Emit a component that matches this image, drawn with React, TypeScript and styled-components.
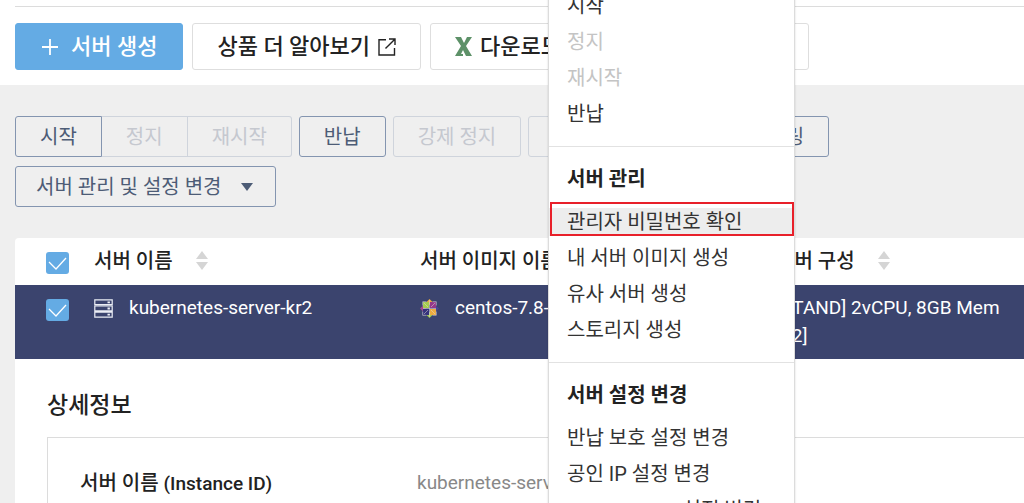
import React from "react";
import styled, { createGlobalStyle, css } from "styled-components";

const GlobalStyle = createGlobalStyle`
  *, *::before, *::after { box-sizing: border-box; }
  html, body { margin: 0; height: 100%; }
  #root { height: 100%; }
  body {
    background: #efefef;
    color: #222;
    font-family: Roboto, "Noto Sans CJK KR", sans-serif;
    font-size: 20px;
    line-height: 28px;
    overflow: hidden;
  }
  button { font: inherit; cursor: pointer; }
`;

const Page = styled.div`
  position: relative;
  height: 100%;
  overflow: hidden;
`;

const Header = styled.header`
  background: #fff;
  padding: 6px 0 15px 15px;
`;

const HeaderActions = styled.div`
  display: flex;
  gap: 9px;
  padding-top: 16px;
  border-top: 1px solid #dcdcdc;
`;

const ActionButton = styled.button<{ $primary?: boolean; $dropdown?: boolean }>`
  display: flex;
  align-items: center;
  justify-content: space-between;
  gap: ${(p) => (p.$primary ? 12 : 8)}px;
  height: 47px;
  min-width: ${(p) => (p.$dropdown ? 214 : 0)}px;
  padding: 0 ${(p) => (p.$dropdown ? 13 : p.$primary ? 25 : 24)}px 0 ${(p) => (p.$primary ? 25 : 24)}px;
  border: 1px solid ${(p) => (p.$primary ? "#64abe4" : "#dedede")};
  border-radius: 3px;
  background: ${(p) => (p.$primary ? "#64abe4" : "#fff")};
  color: ${(p) => (p.$primary ? "#fff" : "#222")};
  font-size: 22px;
  font-weight: 500;
  white-space: nowrap;
`;

const Toolbar = styled.div`
  display: flex;
  flex-wrap: wrap;
  gap: 9px 7px;
  padding: 31px 15px;
`;

const ButtonGroup = styled.div`
  display: flex;
`;

const ToolButton = styled.button<{ $dropdown?: boolean }>`
  display: flex;
  align-items: center;
  gap: 20px;
  height: 41px;
  padding: ${(p) => (p.$dropdown ? "0 22px 0 20px" : "0 24px")};
  border: 1px solid #8495b0;
  border-radius: 3px;
  background: transparent;
  color: #4d5c76;
  white-space: nowrap;

  &:disabled {
    border-color: #cfd4dc;
    color: #c5c8cf;
  }

  ${ButtonGroup} &:not(:last-child) { border-top-right-radius: 0; border-bottom-right-radius: 0; }
  ${ButtonGroup} & + & {
    border-left: 0;
    border-top-left-radius: 0;
    border-bottom-left-radius: 0;
  }
`;

const Card = styled.main`
  margin-left: 15px;
  border-top-left-radius: 4px;
  background: #fff;
  height: 100%;
`;

const Table = styled.table`
  width: 100%;
  table-layout: fixed;
  border-collapse: collapse;
`;

const CheckCol = styled.col`
  width: 79px;
`;
const NameCol = styled.col`
  width: 326px;
`;
const ImageCol = styled.col`
  width: 356px;
`;

const HeadCell = styled.th`
  height: 47px;
  padding: 0 0 2px;
  text-align: left;
  font-weight: 500;
  white-space: nowrap;
`;

const HeadLabel = styled.span`
  display: flex;
  align-items: center;
  gap: 23px;
`;

const BodyRow = styled.tr`
  background: #3b446e;
  color: #fff;
  font-size: 19px;
`;

const Cell = styled.td`
  height: 74px;
  padding: 9px 0;
  vertical-align: top;
`;

const CellContent = styled.span`
  display: flex;
  align-items: center;
  gap: 16px;
`;

const Check = styled.input`
  display: block;
  appearance: none;
  width: 23px;
  height: 22px;
  margin: 5px 0 1px 31px;
  border-radius: 3px;
  background: #64abe4
    url("data:image/svg+xml,%3Csvg xmlns='http://www.w3.org/2000/svg' viewBox='0 0 23 22'%3E%3Cpath d='M3 10l7 7L20 6' fill='none' stroke='white' stroke-width='1.3'/%3E%3C/svg%3E");
`;

const Detail = styled.section`
  padding: 32px 0 0 32px;
`;

const DetailTitle = styled.h2`
  margin: 0 0 16px;
  font-size: 23px;
  line-height: 30px;
  font-weight: 500;
`;

const DetailBox = styled.dl`
  display: flex;
  margin: 0;
  height: 200px;
  padding: 31px 0 0 32px;
  border: 1px solid #dcdcdc;
  border-right: 0;
`;

const DetailTerm = styled.dt`
  width: 337px;
  font-weight: 500;
`;

const Latin = styled.span`
  font-size: 19px;
`;

const DetailValue = styled.dd`
  margin: 0;
  color: #888;
  font-size: 19px;
`;

const Menu = styled.div`
  position: absolute;
  left: 548px;
  top: -70px;
  width: 247px;
  background: #fff;
  border: 1px solid #dcdcdc;
  box-shadow: 0 0 2px rgba(0, 0, 0, 0.15);
`;

const MenuGroup = styled.div`
  padding: 18px 0 10px;
  & + & { border-top: 1px solid #e2e2e2; }
`;

const MenuTitle = styled.h3`
  margin: 0 0 15px;
  padding: 0 18px;
  font-size: 20px;
  line-height: 28px;
  font-weight: 700;
`;

const MenuItem = styled.button<{ $marked?: boolean }>`
  display: block;
  position: relative;
  width: 100%;
  height: 28px;
  margin-bottom: 8px;
  padding: 0 18px;
  border: 0;
  background: ${(p) => (p.$marked ? "#ededed" : "#fff")};
  color: #333;
  line-height: 28px;
  text-align: left;
  white-space: nowrap;
  &:disabled { color: #c4c4c4; }
  ${(p) =>
    p.$marked &&
    css`
      &::after {
        content: "";
        position: absolute;
        inset: -6px 0 0 1px;
        border: 2px solid #e8202a;
      }
    `}
`;

const PlusIcon = () => (
  <svg width="18" height="18" viewBox="0 0 18 18" stroke="currentColor" strokeWidth="1.8">
    <path d="M9 1v16M1 9h16" />
  </svg>
);

const ExternalIcon = () => (
  <svg width="18" height="18" viewBox="0 0 18 18" fill="none" stroke="currentColor" strokeWidth="1.4">
    <path d="M8 1.7H1v15.3h15.500V10M7.500 10.500L16.800 1.200M11 1h6v6" />
  </svg>
);

const ExcelIcon = () => (
  <svg width="17" height="19" viewBox="0 0 17 19" fill="#5d9168">
    <path d="M0 0h6l3 6 3-6h5l-6 9 6 10h-6l-3-6-2 4h2v2H0l6-10z" />
  </svg>
);

const SortIcon = () => (
  <svg width="12" height="19" viewBox="0 0 12 19" fill="#d5d5d5">
    <path d="M6 0l6 8H0zM0 11h12l-6 8z" />
  </svg>
);

const CaretIcon = () => (
  <svg width="12" height="8" viewBox="0 0 12 8" fill="currentColor">
    <path d="M0 0h12L6 8z" />
  </svg>
);

const SmallCaretIcon = () => (
  <svg width="12" height="5" viewBox="0 0 12 5" fill="#64abe4">
    <path d="M0 0h12v2L6 5 0 2z" />
  </svg>
);

const ServerIcon = () => (
  <svg width="19" height="19" viewBox="0 0 19 19" fill="none" stroke="#eceef5" strokeWidth="1.2">
    <path d="M.8.800h17.400v4.900H.8zM.8 7h17.400v4.900H.8zM.8 13.200h17.400v4.900H.8z" />
    <path d="M13.500 3.300h2.400M13.500 9.500h2.400M13.500 15.700h2.400" strokeWidth="1.8" />
  </svg>
);

const CentosIcon = () => (
  <svg width="19" height="19" viewBox="0 0 19 19">
    <path d="M9.500 0l3 3-3 3-3-3z" fill="#edab3e" />
    <path d="M19 9.500l-3 3-3-3 3-3z" fill="#4a468f" />
    <path d="M9.500 19l-3-3 3-3 3 3z" fill="#a5cc4f" />
    <path d="M0 9.500l3-3 3 3-3 3z" fill="#a2478f" />
    <path d="M3 3h6v6H3z" fill="#a5cc4f" />
    <path d="M10 3h6v6h-6z" fill="#94388a" />
    <path d="M3 10h6v6H3z" fill="#35327c" />
    <path d="M10 10h6v6h-6z" fill="#edab3e" />
    <path d="M2.700 6.500v-3.800h3.800M12.500 2.700h3.800v3.800M16.300 12.500v3.800h-3.800M6.500 16.300H2.700v-3.800M9.500 1v17M3 9.500h13" fill="none" stroke="#d8d4df" strokeWidth=".6" />
    <path d="M4 4l4 4M15 4l-4 4M4 15l4-4M15 15l-4-4" stroke="#e6dfd0" strokeWidth=".5" />
  </svg>
);

export default function App() {
  return (
    <>
      <GlobalStyle />
      <Page>
        <Header>
          <HeaderActions>
            <ActionButton $primary><PlusIcon />서버 생성</ActionButton>
            <ActionButton>상품 더 알아보기<ExternalIcon /></ActionButton>
            <ActionButton><ExcelIcon />다운로드</ActionButton>
            <ActionButton $dropdown>화면 새로고침<SmallCaretIcon /></ActionButton>
          </HeaderActions>
        </Header>
        <Toolbar>
          <ButtonGroup>
            <ToolButton>시작</ToolButton>
            <ToolButton disabled>정지</ToolButton>
            <ToolButton disabled>재시작</ToolButton>
          </ButtonGroup>
          <ToolButton>반납</ToolButton>
          <ToolButton disabled>강제 정지</ToolButton>
          <ToolButton disabled>서버 접속</ToolButton>
          <ToolButton>서버 모니터링</ToolButton>
          <ToolButton $dropdown>서버 관리 및 설정 변경<CaretIcon /></ToolButton>
        </Toolbar>
        <Card>
          <Table>
            <colgroup><CheckCol /><NameCol /><ImageCol /><col /></colgroup>
            <thead>
              <tr>
                <HeadCell><Check type="checkbox" defaultChecked aria-label="전체 선택" /></HeadCell>
                <HeadCell><HeadLabel>서버 이름<SortIcon /></HeadLabel></HeadCell>
                <HeadCell>서버 이미지 이름</HeadCell>
                <HeadCell><HeadLabel>서버 구성<SortIcon /></HeadLabel></HeadCell>
              </tr>
            </thead>
            <tbody>
              <BodyRow>
                <Cell><Check type="checkbox" defaultChecked aria-label="kubernetes-server-kr2" /></Cell>
                <Cell><CellContent><ServerIcon />kubernetes-server-kr2</CellContent></Cell>
                <Cell><CellContent><CentosIcon />centos-7.8-64</CellContent></Cell>
                <Cell>[STAND] 2vCPU, 8GB Mem<br />[g2]</Cell>
              </BodyRow>
            </tbody>
          </Table>
          <Detail>
            <DetailTitle>상세정보</DetailTitle>
            <DetailBox>
              <DetailTerm>서버 이름 <Latin>(Instance ID)</Latin></DetailTerm>
              <DetailValue>kubernetes-server-kr2</DetailValue>
            </DetailBox>
          </Detail>
        </Card>
        <Menu>
          <MenuGroup>
            <MenuTitle>서버 제어</MenuTitle>
            <MenuItem>시작</MenuItem>
            <MenuItem disabled>정지</MenuItem>
            <MenuItem disabled>재시작</MenuItem>
            <MenuItem>반납</MenuItem>
          </MenuGroup>
          <MenuGroup>
            <MenuTitle>서버 관리</MenuTitle>
            <MenuItem $marked>관리자 비밀번호 확인</MenuItem>
            <MenuItem>내 서버 이미지 생성</MenuItem>
            <MenuItem>유사 서버 생성</MenuItem>
            <MenuItem>스토리지 생성</MenuItem>
          </MenuGroup>
          <MenuGroup>
            <MenuTitle>서버 설정 변경</MenuTitle>
            <MenuItem>반납 보호 설정 변경</MenuItem>
            <MenuItem>공인 IP 설정 변경</MenuItem>
            <MenuItem><Latin>Network ACL</Latin> 설정 변경</MenuItem>
          </MenuGroup>
        </Menu>
      </Page>
    </>
  );
}
